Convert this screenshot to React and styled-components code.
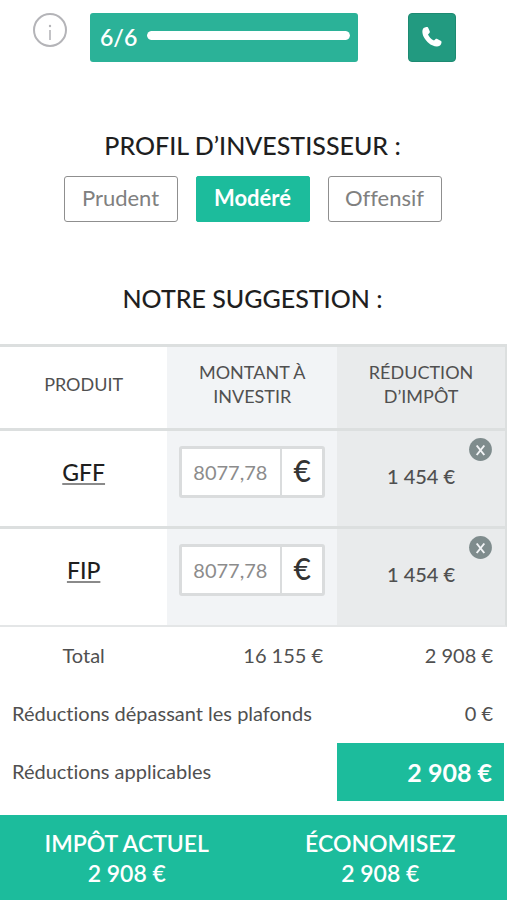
import React, { useState } from "react";
import styled, { createGlobalStyle, css, ThemeProvider } from "styled-components";

const theme = {
  colors: {
    white: "#ffffff",
    mint: "#1cbc9c",
    jungle: "#2bb298",
    elm: "#229a80",
    ink: "#1f1f1f",
    tundora: "#505050",
    gray: "#808080",
    line: "#dcdfdf",
    porcelain: "#f2f4f6",
    athens: "#e9ebec",
    badge: "#7f8c8d",
  },
};

const GlobalStyle = createGlobalStyle`
  * {
    box-sizing: border-box;
  }

  body {
    margin: 0;
    background: #ffffff;
    font-family: Lato, sans-serif;
    font-variant-ligatures: none;
  }

  button,
  input {
    font-family: inherit;
    font-variant-ligatures: none;
  }
`;

const Page = styled.div`
  display: flex;
  flex-direction: column;
  min-height: 100vh;
  background: ${({ theme }) => theme.colors.white};
  color: ${({ theme }) => theme.colors.tundora};
`;

const Header = styled.header`
  display: flex;
  align-items: flex-start;
  padding: 13px 51px 0 33px;
`;

const InfoButton = styled.button`
  display: flex;
  padding: 0;
  border: 0;
  background: none;
  cursor: pointer;
`;

const Steps = styled.div`
  display: flex;
  flex: 1;
  height: 49px;
  margin: 0 50px 0 23px;
  padding: 0 8px 0 10px;
  border-radius: 3px;
  background: ${({ theme }) => theme.colors.jungle};
`;

const StepsLabel = styled.span`
  color: ${({ theme }) => theme.colors.white};
  font-size: 23px;
  font-weight: 600;
  line-height: 48px;
`;

const StepsTrack = styled.div`
  flex: 1;
  height: 9px;
  margin: 18px 0 0 10px;
  border-radius: 5px;
  background: rgba(255, 255, 255, 0.3);
  overflow: hidden;
`;

const StepsFill = styled.div`
  height: 100%;
  border-radius: 5px;
  background: ${({ theme }) => theme.colors.white};
`;

const PhoneButton = styled.button`
  display: flex;
  justify-content: center;
  width: 48px;
  height: 49px;
  padding: 13px 0 0;
  border: 1px solid #1d8a72;
  border-radius: 4px;
  background: ${({ theme }) => theme.colors.elm};
  cursor: pointer;
`;

const Title = styled.h2`
  margin: 0;
  color: ${({ theme }) => theme.colors.ink};
  font-size: 25px;
  font-weight: 500;
  line-height: 32px;
  text-align: center;
`;

const Section = styled.section`
  padding: 0 18px 0 16px;
`;

const Profile = styled(Section)`
  padding-top: 67px;
  padding-bottom: 60px;
`;

const Choices = styled.div`
  display: flex;
  justify-content: center;
  gap: 18px;
  margin-top: 15px;
`;

const Choice = styled.button`
  width: 114px;
  height: 46px;
  padding: 0 0 3px;
  border: 1px solid #8f8f8f;
  border-radius: 3px;
  background: ${({ theme }) => theme.colors.white};
  color: ${({ theme }) => theme.colors.gray};
  font-size: 22px;
  font-weight: 400;
  cursor: pointer;

  ${(props) =>
    props.$active &&
    css`
      border-color: ${({ theme }) => theme.colors.mint};
      border-radius: 2px;
      background: ${({ theme }) => theme.colors.mint};
      color: ${({ theme }) => theme.colors.white};
      font-weight: 700;
    `}
`;

const Table = styled.table`
  width: 100%;
  margin-top: 30px;
  border-spacing: 0;
  table-layout: fixed;
`;

const ProductCol = styled.col`
  width: 33%;
`;

const HeadCell = styled.th`
  height: 87px;
  padding: 0 24px 8px;
  border-top: 3px solid ${({ theme }) => theme.colors.line};
  border-bottom: 3px solid ${({ theme }) => theme.colors.line};
  background: ${({ theme, $tone }) => theme.colors[$tone]};
  font-size: 18px;
  font-weight: 400;
  line-height: 24px;

  &:last-child {
    border-right: 2px solid ${({ theme }) => theme.colors.line};
  }
`;

const Cell = styled.td`
  position: relative;
  height: 98px;
  padding: 0 12px 14px;
  border-bottom: 3px solid ${({ theme }) => theme.colors.line};
  background: ${({ theme, $tone }) => theme.colors[$tone]};
  text-align: center;

  &:last-child {
    padding-bottom: 6px;
    border-right: 2px solid ${({ theme }) => theme.colors.line};
  }

  tr:last-child > & {
    border-bottom: 2px solid #e4e6e7;
  }
`;

const ProductLink = styled.a`
  color: ${({ theme }) => theme.colors.ink};
  font-size: 23px;
  font-weight: 500;
  text-decoration: underline;
  text-decoration-color: #8a8a8a;
  text-decoration-thickness: 2px;
  text-underline-offset: 2px;
`;

const Amount = styled.label`
  display: flex;
  height: 52px;
  border: 3px solid #dadcdd;
  border-radius: 3px;
  background: ${({ theme }) => theme.colors.white};
`;

const AmountInput = styled.input`
  flex: 1;
  min-width: 0;
  padding: 0 0 0 11px;
  border: 0;
  background: none;
  color: #8c8c8c;
  font-size: 20px;
  outline: none;
`;

const Currency = styled.span`
  width: 42px;
  border-left: 2px solid #dadcdd;
  color: #333333;
  font-size: 30px;
  font-weight: 500;
  line-height: 42px;
`;

const Reduction = styled.span`
  font-size: 20px;
  font-weight: 500;
`;

const RemoveButton = styled.button`
  position: absolute;
  top: 7px;
  right: 13px;
  display: flex;
  padding: 0;
  border: 0;
  background: none;
  cursor: pointer;
`;

const SumLabel = styled.th`
  height: 58px;
  padding: 0 12px 2px;
  font-size: 20px;
  font-weight: 400;
  text-align: ${({ $align }) => $align || "left"};
`;

const SumValue = styled.td`
  padding: 0 14px 2px 12px;
  font-size: 20px;
  text-align: right;
`;

const SumHighlight = styled(SumValue)`
  padding: 0 12px;
  border-right: 3px solid ${({ theme }) => theme.colors.white};
  background: ${({ theme }) => theme.colors.mint};
  color: ${({ theme }) => theme.colors.white};
  font-size: 25px;
  font-weight: 700;
`;

const Footer = styled.footer`
  display: grid;
  grid-template-columns: 1fr 1fr;
  flex: 1;
  margin-top: 14px;
  padding-top: 13px;
  background: ${({ theme }) => theme.colors.mint};
`;

const FooterItem = styled.div`
  color: ${({ theme }) => theme.colors.white};
  font-size: 23px;
  font-weight: 600;
  line-height: 30px;
  text-align: center;
`;

const IconInfo = () => (
  <svg width="34" height="36" viewBox="0 0 34 36" fill="none" aria-hidden="true">
    <circle cx="17" cy="17" r="16" stroke="#b4b4b8" strokeWidth="2" />
    <path d="M17 17v10" stroke="#b4b4b8" strokeWidth="1.6" />
    <circle cx="17" cy="13" r="1.2" fill="#b4b4b8" />
  </svg>
);

const IconPhone = () => (
  <svg width="20" height="20" viewBox="0 0 20 20" aria-hidden="true">
    <path
      fill="#ffffff"
      d="M1.2 1.6C2 .6 4 .1 4.900.1c.8 0 1.200.4 1.500 1.100l1.300 3.100c.3.800.1 1.400-.5 1.900L6 7.400c1.100 2.500 3.200 4.700 6 6.100l1.400-1.200c.6-.5 1.200-.6 1.900-.2l3.300 1.700c.8.4 1 .9.900 1.600-.2 1.300-.9 2.600-1.900 3.400-1.600 1.200-4.400 1-7.400-.5C5.600 16 2 11.600.7 7.200.2 5 .2 3 1.200 1.600z"
    />
  </svg>
);

const IconRemove = () => (
  <svg width="23" height="23" viewBox="0 0 23 23" aria-hidden="true">
    <circle cx="11.500" cy="11.500" r="11.400" fill={theme.colors.badge} />
    <path d="M7.700 7.500l7.600 9.500M15.300 7.500l-7.600 9.500" stroke="#f2f4f6" strokeWidth="2" />
  </svg>
);

const profiles = ["Prudent", "Modéré", "Offensif"];

const products = [
  { name: "GFF", amount: "8077,78", reduction: "1 454 €" },
  { name: "FIP", amount: "8077,78", reduction: "1 454 €" },
];

const StepCounter = ({ current, total }) => (
  <Steps>
    <StepsLabel>
      {current}/{total}
    </StepsLabel>
    <StepsTrack>
      <StepsFill style={{ width: `${(current / total) * 100}%` }} />
    </StepsTrack>
  </Steps>
);

const ProductRow = ({ product }) => {
  const [amount, setAmount] = useState(product.amount);

  return (
    <tr>
      <Cell $tone="white">
        <ProductLink href="#">{product.name}</ProductLink>
      </Cell>
      <Cell $tone="porcelain">
        <Amount>
          <AmountInput
            aria-label={`Montant ${product.name}`}
            value={amount}
            onChange={(e) => setAmount(e.target.value)}
          />
          <Currency>€</Currency>
        </Amount>
      </Cell>
      <Cell $tone="athens">
        <Reduction>{product.reduction}</Reduction>
        <RemoveButton type="button" aria-label={`Supprimer ${product.name}`}>
          <IconRemove />
        </RemoveButton>
      </Cell>
    </tr>
  );
};

const App = () => {
  const [profile, setProfile] = useState("Modéré");

  return (
    <ThemeProvider theme={theme}>
      <GlobalStyle />
      <Page>
        <Header>
          <InfoButton type="button" aria-label="Informations">
            <IconInfo />
          </InfoButton>
          <StepCounter current={6} total={6} />
          <PhoneButton type="button" aria-label="Appeler">
            <IconPhone />
          </PhoneButton>
        </Header>

        <Profile>
          <Title>PROFIL D’INVESTISSEUR :</Title>
          <Choices>
            {profiles.map((item) => (
              <Choice
                key={item}
                type="button"
                $active={item === profile}
                aria-pressed={item === profile}
                onClick={() => setProfile(item)}
              >
                {item}
              </Choice>
            ))}
          </Choices>
        </Profile>

        <Section>
          <Title>NOTRE SUGGESTION :</Title>
        </Section>
        <Table>
          <colgroup>
            <ProductCol />
            <col />
            <col />
          </colgroup>
          <thead>
            <tr>
              <HeadCell $tone="white">PRODUIT</HeadCell>
              <HeadCell $tone="porcelain">MONTANT À INVESTIR</HeadCell>
              <HeadCell $tone="athens">RÉDUCTION D’IMPÔT</HeadCell>
            </tr>
          </thead>
          <tbody>
            {products.map((product) => (
              <ProductRow key={product.name} product={product} />
            ))}
          </tbody>
          <tfoot>
            <tr>
              <SumLabel $align="center">Total</SumLabel>
              <SumValue>16 155 €</SumValue>
              <SumValue>2 908 €</SumValue>
            </tr>
            <tr>
              <SumLabel colSpan={2}>Réductions dépassant les plafonds</SumLabel>
              <SumValue>0 €</SumValue>
            </tr>
            <tr>
              <SumLabel colSpan={2}>Réductions applicables</SumLabel>
              <SumHighlight>2 908 €</SumHighlight>
            </tr>
          </tfoot>
        </Table>

        <Footer>
          <FooterItem>
            <div>IMPÔT ACTUEL</div>
            <div>2 908 €</div>
          </FooterItem>
          <FooterItem>
            <div>ÉCONOMISEZ</div>
            <div>2 908 €</div>
          </FooterItem>
        </Footer>
      </Page>
    </ThemeProvider>
  );
};

export default App;
